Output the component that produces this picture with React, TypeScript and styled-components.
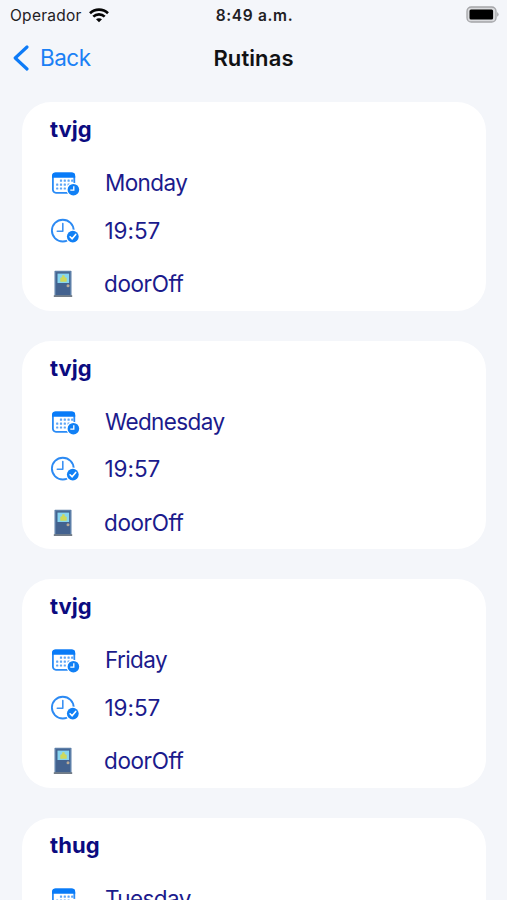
import React from 'react';
import styled, { createGlobalStyle } from 'styled-components';

const GlobalStyle = createGlobalStyle`
  * { box-sizing: border-box; }
  html, body { margin: 0; height: 900px; overflow: hidden; background: #f4f6fa; }
  body { font-family: Inter, "Liberation Sans", sans-serif; }
  svg { display: block; flex: none; }
`;

const Screen = styled.main`
  width: 507px;
  height: 900px;
  overflow: hidden;
  background: #f4f6fa;
`;

const StatusBar = styled.header`
  display: grid;
  grid-template-columns: 1fr auto 1fr;
  align-items: center;
  height: 30px;
  padding: 0 8px 0 10px;
  color: #1f2023;
`;

const Carrier = styled.div`
  display: flex;
  align-items: center;
  gap: 7px;
  font-size: 15.5px;
  letter-spacing: 0.27px;
`;

const Clock = styled.div`
  font-size: 15.5px;
  font-weight: 600;
  letter-spacing: 0.65px;
`;

const BatterySlot = styled.div`
  display: flex;
  justify-content: flex-end;
  padding-bottom: 1px;
`;

const NavBar = styled.nav`
  display: grid;
  grid-template-columns: 1fr auto 1fr;
  align-items: center;
  height: 55px;
  padding: 0 13px;
`;

const BackButton = styled.button`
  display: flex;
  align-items: center;
  gap: 11px;
  padding: 0;
  border: 0;
  background: none;
  color: #1a80f5;
  font-family: inherit;
  font-size: 22.5px;
  letter-spacing: -0.5px;
`;

const NavTitle = styled.h1`
  margin: 0;
  color: #111214;
  font-size: 22px;
  font-weight: 600;
  letter-spacing: 0.1px;
`;

const CardList = styled.section`
  display: flex;
  flex-direction: column;
  gap: 30px;
  padding: 17px 21px 0 22px;
`;

const Card = styled.article`
  flex: none;
  height: 208.67px;
  border-radius: 29px;
  background: #fff;
  color: #0b0b80;
  padding-left: 28px;
`;

const CardTitle = styled.h2`
  margin: 0;
  height: 54px;
  line-height: 54px;
  font-size: 22px;
  font-weight: 700;
  letter-spacing: 0.05px;
`;

const Row = styled.div<{ $height: number; $gap?: number }>`
  display: grid;
  grid-template-columns: 55px 1fr;
  align-items: center;
  height: ${(p) => p.$height}px;
  margin-top: ${(p) => p.$gap ?? 0}px;
`;

const Value = styled.span<{ $spacing: number; $shift?: number }>`
  font-size: 22.5px;
  line-height: 28px;
  white-space: nowrap;
  color: #1b1b8c;
  letter-spacing: ${(p) => p.$spacing}px;
  margin-left: ${(p) => p.$shift ?? 0}px;
`;

const WifiIcon = () => (
  <svg width="20" height="15" viewBox="0 0 20 15" fill="none" stroke="#050505" strokeWidth="2.6">
    <path d="M1 5.3C6 .4 14 .4 19 5.3" />
    <path d="M4.3 8.7C7.4 5.6 12.6 5.6 15.7 8.7" />
    <path d="M10 14.3 7 11.3C8.6 9.8 11.4 9.8 13 11.3Z" fill="#050505" stroke="none" />
  </svg>
);

const BatteryIcon = () => (
  <svg width="33" height="17" viewBox="0 0 33 17">
    <rect x="1" y="1" width="29" height="15" rx="4.3" fill="#d9dadd" stroke="#a4a5a8" strokeWidth="1.3" />
    <rect x="3.5" y="3.6" width="23.6" height="9.8" rx="1.5" fill="#000" />
    <path d="M31.2 6Q34 8.4 31.2 10.8Z" fill="#a4a5a8" />
  </svg>
);

const BackChevron = () => (
  <svg width="16" height="26" viewBox="0 0 16 26" fill="none">
    <path d="M14 2 2.2 13 14 24" stroke="#0d7bf7" strokeWidth="3.1" strokeLinecap="round" strokeLinejoin="round" />
  </svg>
);

const calendarDots = [
  [9.2, 8.3], [13, 8.3], [16.8, 8.3], [20.4, 8.3],
  [5.4, 12.2], [9.2, 12.2], [13, 12.2], [16.8, 12.2],
  [5.4, 16.1], [9.2, 16.1], [13, 16.1],
];

const CalendarIcon = () => (
  <svg width="30" height="28" viewBox="0 0 30 28">
    <g transform="translate(1.8 3.4)">
      <rect x="1.1" y="1" width="21.4" height="19.4" rx="3" fill="#fff" stroke="#2a8bf6" strokeWidth="1.8" />
      <path d="M.2 5.4V3.5Q.2.1 3.6.1H20Q23.4.1 23.4 3.5V5.4Z" fill="#087bf8" />
      {calendarDots.map(([x, y]) => (
        <rect key={`${x}-${y}`} x={x - 1.1} y={y - 1.1} width="2.2" height="2.2" rx=".5" fill="#5ea6f7" />
      ))}
      <circle cx="21.6" cy="17.3" r="7" fill="#fff" />
      <circle cx="21.6" cy="17.3" r="5.8" fill="#1180f5" />
      <path d="M22 13.8v4h-3.5" fill="none" stroke="#fff" strokeWidth="1.3" />
    </g>
  </svg>
);

const ClockIcon = () => (
  <svg width="30" height="28" viewBox="0 0 30 28" fill="none">
    <circle cx="12.8" cy="13.6" r="10.9" stroke="#2c8af3" strokeWidth="1.9" />
    <path d="M12.8 6.5v7.8H7.3" stroke="#3d92f3" strokeWidth="1.6" strokeLinecap="round" strokeLinejoin="round" />
    <circle cx="22.8" cy="19.6" r="7.2" fill="#fff" />
    <circle cx="22.8" cy="19.6" r="5.9" fill="#1180f5" />
    <path d="m20.1 19.8 2 2 3.6-4.4" stroke="#fff" strokeWidth="1.6" strokeLinecap="round" />
  </svg>
);

const DoorIcon = () => (
  <svg width="30" height="30" viewBox="0 0 30 30">
    <path d="M4.5 2.5Q4.5 1.8 5.2 1.8H20.8Q21.5 1.8 21.5 2.5V27H4.5Z" fill="#5d7fa8" />
    <path d="M6 3.2H20V26H6Z" fill="#43628f" />
    <rect x="7.5" y="4.6" width="11.6" height="9.4" fill="#86d5ef" />
    <path d="M10.3 12.8V8.9L12.2 8V6.2H14.6V8L16.7 8.9V12.8Z" fill="#cfd95a" />
    <circle cx="18" cy="16.8" r="1.5" fill="#b9aa96" />
    <path d="M3.8 26.2H22.2V28H3.8Z" fill="#727b86" />
  </svg>
);

interface Routine {
  name: string;
  day: string;
}

const routines: Routine[] = [
  { name: 'tvjg', day: 'Monday' },
  { name: 'tvjg', day: 'Wednesday' },
  { name: 'tvjg', day: 'Friday' },
  { name: 'thug', day: 'Tuesday' },
];

const RoutineCard = ({ name, day }: Routine) => (
  <Card>
    <CardTitle>{name}</CardTitle>
    <Row $height={54}>
      <CalendarIcon />
      <Value $spacing={-0.6}>{day}</Value>
    </Row>
    <Row $height={41}>
      <ClockIcon />
      <Value $spacing={-0.05} $shift={-0.5}>19:57</Value>
    </Row>
    <Row $height={54} $gap={6}>
      <DoorIcon />
      <Value $spacing={-0.4} $shift={-1}>doorOff</Value>
    </Row>
  </Card>
);

export default function App() {
  return (
    <>
      <GlobalStyle />
      <Screen>
        <StatusBar>
          <Carrier>
            Operador
            <WifiIcon />
          </Carrier>
          <Clock>8:49 a.m.</Clock>
          <BatterySlot>
            <BatteryIcon />
          </BatterySlot>
        </StatusBar>
        <NavBar>
          <BackButton>
            <BackChevron />
            Back
          </BackButton>
          <NavTitle>Rutinas</NavTitle>
        </NavBar>
        <CardList>
          {routines.map((routine) => (
            <RoutineCard key={routine.day} {...routine} />
          ))}
        </CardList>
      </Screen>
    </>
  );
}
